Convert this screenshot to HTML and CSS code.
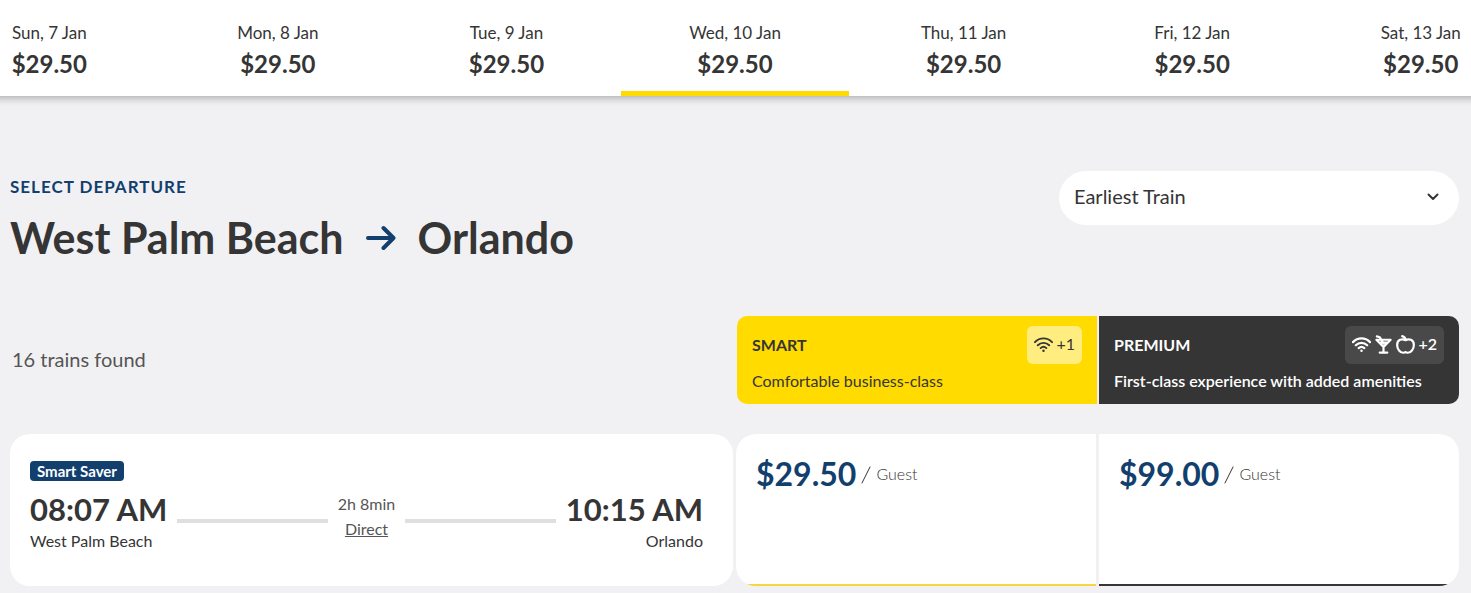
FILE: index.html
```html
<!DOCTYPE html>
<html lang="en">
<head>
    <meta charset="UTF-8">
    <meta name="viewport" content="width=device-width, initial-scale=1.0">
    <title>Select Departure</title>
    <link rel="stylesheet" href="styles.css">
</head>
<body>
    <!-- Fare calendar -->
    <nav class="date-strip">
        <div class="date-track">
            <button type="button" class="date-item"><span class="date-day">Sun, 7 Jan</span><span class="date-price">$29.50</span></button>
            <button type="button" class="date-item"><span class="date-day">Mon, 8 Jan</span><span class="date-price">$29.50</span></button>
            <button type="button" class="date-item"><span class="date-day">Tue, 9 Jan</span><span class="date-price">$29.50</span></button>
            <button type="button" class="date-item active"><span class="date-day">Wed, 10 Jan</span><span class="date-price">$29.50</span></button>
            <button type="button" class="date-item"><span class="date-day">Thu, 11 Jan</span><span class="date-price">$29.50</span></button>
            <button type="button" class="date-item"><span class="date-day">Fri, 12 Jan</span><span class="date-price">$29.50</span></button>
            <button type="button" class="date-item"><span class="date-day">Sat, 13 Jan</span><span class="date-price">$29.50</span></button>
        </div>
    </nav>

    <main class="container">
        <header class="page-header">
            <div class="route">
                <p class="route-label">SELECT DEPARTURE</p>
                <h1 class="route-title">
                    <span>West Palm Beach</span>
                    <svg class="route-arrow" viewBox="0 0 30 26" aria-hidden="true"><path d="M2 13H27.500M17.500 3L27.500 13L17.500 23"/></svg>
                    <span>Orlando</span>
                </h1>
            </div>
            <div class="sort">
                <select class="sort-select" aria-label="Sort trains">
                    <option>Earliest Train</option>
                    <option>Latest Train</option>
                    <option>Lowest Price</option>
                </select>
                <svg class="sort-chevron" viewBox="0 0 12 8" aria-hidden="true"><path d="M1.500 1.500L6 6L10.500 1.500"/></svg>
            </div>
        </header>

        <!-- Class headings -->
        <section class="row">
            <p class="train-count">16 trains found</p>
            <div class="pair class-pair">
                <div class="class-head smart">
                    <div class="class-top">
                        <h2 class="class-name">SMART</h2>
                        <div class="amenities">
                            <svg class="icon" viewBox="0 0 20 20" aria-hidden="true"><path d="M1 7.500C6 2.300 14 2.300 19 7.500M4 10.800C7.400 7.400 12.600 7.400 16 10.800M7 13.800C8.800 12.200 11.200 12.200 13 13.800"/><circle class="dot" cx="10" cy="16.500" r="1.300"/></svg>
                            <span>+1</span>
                        </div>
                    </div>
                    <p class="class-text">Comfortable business-class</p>
                </div>
                <div class="class-head premium">
                    <div class="class-top">
                        <h2 class="class-name">PREMIUM</h2>
                        <div class="amenities">
                            <svg class="icon" viewBox="0 0 20 20" aria-hidden="true"><path d="M1 7.500C6 2.300 14 2.300 19 7.500M4 10.800C7.400 7.400 12.600 7.400 16 10.800M7 13.800C8.800 12.200 11.200 12.200 13 13.800"/><circle class="dot" cx="10" cy="16.500" r="1.300"/></svg>
                            <svg class="icon" viewBox="0 0 20 20" aria-hidden="true"><path d="M2.500 5H17.500L10 12.500ZM5.500 8H14.500M10 12.500V18.500M6 18.500H14M3 1.500L6 2.300L10 9"/></svg>
                            <svg class="icon" viewBox="0 0 20 20" aria-hidden="true"><path d="M10 5.500C6.500 3.300 1.200 5 1.200 10.500C1.200 15 4.500 18.700 7.500 18.700C8.700 18.700 9 18 10 18C11 18 11.300 18.700 12.500 18.700C15.500 18.700 18.800 15 18.800 10.500C18.800 5 13.500 3.300 10 5.500ZM10 5.500C10 3.300 9 1.700 6.500 1.200"/></svg>
                            <span>+2</span>
                        </div>
                    </div>
                    <p class="class-text">First-class experience with added amenities</p>
                </div>
            </div>
        </section>

        <!-- Train -->
        <section class="row train">
            <article class="trip">
                <span class="badge">Smart Saver</span>
                <div class="trip-times">
                    <div class="stop">
                        <span class="stop-time">08:07 AM</span>
                        <span class="stop-city">West Palm Beach</span>
                    </div>
                    <div class="line"></div>
                    <div class="duration">
                        <span>2h 8min</span>
                        <a href="#" class="direct">Direct</a>
                    </div>
                    <div class="line"></div>
                    <div class="stop stop-end">
                        <span class="stop-time">10:15 AM</span>
                        <span class="stop-city">Orlando</span>
                    </div>
                </div>
            </article>
            <div class="pair">
                <div class="fare fare-smart">
                    <span class="fare-price">$29.50</span>
                    <svg class="slash" viewBox="0 0 10 18" aria-hidden="true"><path d="M1 17L9 1"/></svg>
                    <span class="fare-unit">Guest</span>
                </div>
                <div class="fare fare-premium">
                    <span class="fare-price">$99.00</span>
                    <svg class="slash" viewBox="0 0 10 18" aria-hidden="true"><path d="M1 17L9 1"/></svg>
                    <span class="fare-unit">Guest</span>
                </div>
            </div>
        </section>
    </main>
</body>
</html>
```

FILE: styles.css
```css
:root {
    --yellow: #ffdb00;
    --dark: #353535;
    --navy: #123f6d;
    --background: #f1f1f4;
    --grey: #555;
}

* {
    box-sizing: border-box;
}

body {
    margin: 0;
    background-color: var(--background);
    color: var(--dark);
    font-family: Lato, "Liberation Sans", sans-serif;
    font-size: 16px;
    line-height: 20px;
}

h1, h2, p {
    margin: 0;
}

svg {
    fill: none;
    stroke: currentColor;
    stroke-linecap: round;
    stroke-linejoin: round;
    flex-shrink: 0;
}

/* Fare calendar */
.date-strip {
    overflow: hidden;
    padding-bottom: 12px;
}

/* first and last day run past the edges of the window */
.date-track {
    display: flex;
    margin: 0 -64px 0 -65px;
    background-color: white;
    box-shadow: 0 2px 8px rgba(0, 0, 0, 0.3);
}

.date-item {
    flex: 1;
    display: flex;
    flex-direction: column;
    align-items: center;
    gap: 7px;
    padding: 23px 0 13px;
    border: none;
    border-bottom: 5px solid transparent;
    background: none;
    color: inherit;
    font: inherit;
    cursor: pointer;
}

.date-item.active {
    border-bottom-color: var(--yellow);
}

.date-day {
    font-size: 17px;
}

.date-price {
    font-size: 24px;
    line-height: 28px;
    font-weight: 700;
}

.container {
    padding: 63px 12px 8px 10px;
}

.page-header {
    display: flex;
    justify-content: space-between;
    align-items: flex-start;
    margin-bottom: 52px;
}

.route-label {
    padding-top: 6px;
    color: var(--navy);
    font-size: 17px;
    font-weight: 700;
    letter-spacing: 1px;
}

.route-title {
    display: flex;
    align-items: center;
    gap: 22px;
    padding-top: 15px;
    font-size: 43px;
    line-height: 52px;
    font-weight: 700;
}

.route-arrow {
    width: 30px;
    height: 26px;
    color: var(--navy);
    stroke-width: 4;
}

/* Sort drop-down */
.sort {
    position: relative;
    flex: 0 0 400px;
}

.sort-select {
    width: 100%;
    height: 54px;
    padding: 0 40px 4px 15px;
    border: none;
    border-radius: 27px;
    appearance: none;
    background-color: white;
    color: inherit;
    font-family: inherit;
    font-size: 20px;
}

.sort-chevron {
    position: absolute;
    top: 22px;
    right: 20px;
    width: 12px;
    height: 8px;
    stroke-width: 2;
    pointer-events: none;
}

/* Rows: trip on the left, the two fares on the right */
.row,
.pair {
    display: grid;
    grid-template-columns: 1fr 1fr;
    gap: 3px;
}

.class-pair {
    gap: 2px;
    padding-left: 1px;
}

.train-count {
    align-self: center;
    padding: 0 0 2px 2px;
    color: var(--grey);
    font-size: 20px;
}

.class-head {
    padding: 10px 15px 13px;
}

.smart {
    border-radius: 10px 0 0 10px;
    background-color: var(--yellow);
}

.premium {
    border-radius: 0 10px 10px 0;
    background-color: var(--dark);
    color: white;
}

.class-top {
    display: flex;
    justify-content: space-between;
    align-items: center;
    margin-bottom: 7px;
}

.class-name {
    font-size: 16px;
    font-weight: 700;
}

.class-text {
    font-size: 16px;
}

.premium .class-text,
.premium .amenities {
    font-weight: 600;
}

.amenities {
    display: flex;
    align-items: center;
    gap: 3px;
    height: 38px;
    padding: 0 7px 2px;
    border-radius: 6px;
    background-color: rgba(255, 255, 255, 0.5);
}

.premium .amenities {
    background-color: rgba(255, 255, 255, 0.1);
}

.icon {
    width: 19px;
    height: 19px;
    stroke-width: 2;
}

.premium .icon {
    stroke-width: 2.3;
}

.dot {
    fill: currentColor;
    stroke: none;
}

/* Train card */
.train {
    margin-top: 30px;
}

.trip {
    padding: 27px 30px 35px 20px;
    border-radius: 20px;
    background-color: white;
}

.badge {
    display: block;
    width: fit-content;
    padding: 0 7px;
    border-radius: 4px;
    background-color: var(--navy);
    color: white;
    font-size: 15px;
    font-weight: 700;
}

.trip-times {
    display: flex;
    align-items: center;
    gap: 10px;
    margin-top: 8px;
}

.stop {
    display: flex;
    flex-direction: column;
    gap: 2px;
}

.stop-end {
    align-items: flex-end;
}

.stop-time {
    font-size: 31px;
    line-height: 40px;
    font-weight: 700;
}

.line {
    flex: 1;
    height: 4px;
    margin-top: 2px;
    background-color: #dfdfdf;
}

.duration {
    display: flex;
    flex-direction: column;
    align-items: center;
    gap: 5px;
    padding-bottom: 8px;
    color: var(--grey);
}

.direct {
    color: inherit;
}

.fare {
    display: flex;
    align-items: flex-start;
    padding: 20px;
}

.fare-smart {
    border-radius: 20px 0 0 20px;
    background: linear-gradient(to top, #f7d53b 2px, white 2px);
}

.fare-premium {
    border-radius: 0 20px 20px 0;
    background: linear-gradient(to top, var(--dark) 2px, white 2px);
}

.fare-price {
    color: var(--navy);
    font-size: 32px;
    line-height: 40px;
    font-weight: 700;
}

.slash {
    width: 10px;
    height: 18px;
    margin: 12px 5px 0;
    stroke-width: 1;
}

.fare-unit {
    padding-top: 10px;
    font-weight: 300;
}
```
